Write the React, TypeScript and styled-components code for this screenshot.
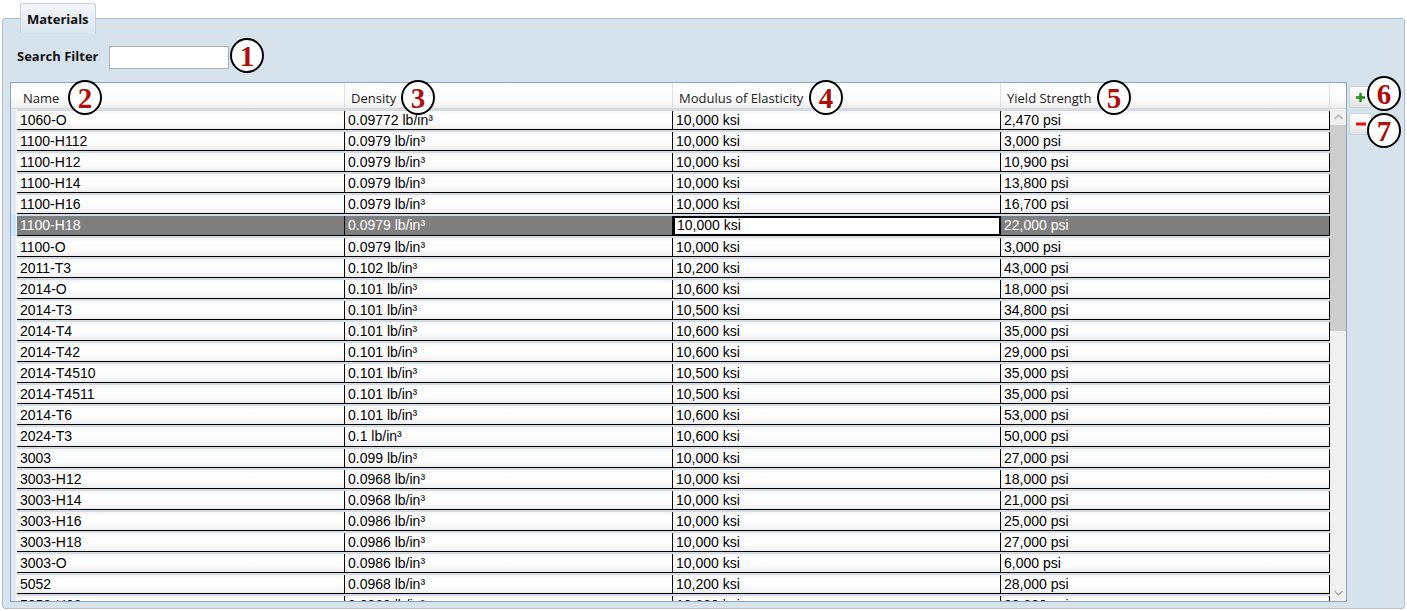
import React from "react";
import styled, { createGlobalStyle } from "styled-components";

const GlobalStyle = createGlobalStyle`
  html, body {
    margin: 0;
    padding: 0;
    background: #ffffff;
  }
  body {
    font-family: "Open Sans", "Liberation Sans", sans-serif;
  }
`;

const ROW_H = 21.1;

const Page = styled.div`
  position: relative;
  width: 1407px;
  height: 611px;
  overflow: hidden;
  padding-top: 3px;
  box-sizing: border-box;
`;

const TabBar = styled.div`
  display: flex;
  padding-left: 20px;
  height: 15px;
`;

const Tab = styled.div`
  position: relative;
  z-index: 1;
  height: 30px;
  width: 76px;
  box-sizing: border-box;
  padding-left: 6px;
  padding-top: 6px;
  border: 1px solid #c3d1de;
  border-bottom: none;
  border-radius: 3px 3px 0 0;
  background: linear-gradient(#f4f7fa, #dbe6ef);
  font-weight: bold;
  font-size: 13px;
  line-height: 18px;
  color: #111;
`;

const Panel = styled.div`
  margin: 0 2px;
  height: 591px;
  box-sizing: border-box;
  border: 1px solid #aebfd0;
  border-radius: 3px;
  background: #d6e3ed;
  padding: 27px 7px 6px 7px;
  display: flex;
  flex-direction: column;
  gap: 13px;
`;

const SearchRow = styled.div`
  display: flex;
  align-items: center;
  gap: 10px;
  padding-left: 7px;
  height: 23px;
`;

const Label = styled.span`
  font-weight: bold;
  font-size: 13px;
  color: #111;
  margin-top: -3px;
`;

const SearchInput = styled.input`
  width: 120px;
  height: 23px;
  box-sizing: border-box;
  border: 1px solid #abadb3;
  background: #fff;
  outline: none;
`;

const ContentRow = styled.div`
  display: flex;
  gap: 2px;
  align-items: flex-start;
`;

const Grid = styled.div`
  width: 1337px;
  height: 520px;
  box-sizing: border-box;
  border: 1px solid #8aa6c6;
  background: #d3dbe3;
  display: flex;
  flex-direction: column;
`;

const HeaderRow = styled.div`
  display: flex;
  height: 26px;
  flex-shrink: 0;
  background: linear-gradient(#ffffff 0%, #fbfbfb 60%, #efefef 100%);
  border-bottom: 1px solid #d8d8d8;
  box-sizing: border-box;
`;

const HeaderSpacer = styled.div`
  width: 6px;
`;

const HeaderCell = styled.div<{ $w: number }>`
  width: ${(p) => p.$w}px;
  box-sizing: border-box;
  border-right: 1px solid #e2e2e2;
  padding-left: 6px;
  padding-top: 6px;
  font-size: 13px;
  color: #222;
  white-space: nowrap;
`;

const Body = styled.div`
  flex: 1;
  display: flex;
  overflow: hidden;
`;

const RowHeaderCol = styled.div`
  width: 6px;
  background: #e3e9ef;
  border-right: 1px solid #f4f6f8;
  box-sizing: border-box;
  display: flex;
  flex-direction: column;
`;

const RowHeaderMark = styled.div<{ $selected: boolean }>`
  height: ${ROW_H}px;
  flex-shrink: 0;
  box-sizing: border-box;
  border-top: 2px solid transparent;
  background: ${(p) => (p.$selected ? "#cfe4f7" : "transparent")};
`;

const Rows = styled.div`
  width: 1313px;
  display: flex;
  flex-direction: column;
`;

const Row = styled.div<{ $selected: boolean }>`
  display: flex;
  height: ${ROW_H}px;
  flex-shrink: 0;
  box-sizing: border-box;
  padding-top: 2px;
  background: #d3dbe3;
  color: ${(p) => (p.$selected ? "#ffffff" : "#000")};
`;

const Cell = styled.div<{ $w: number; $selected: boolean; $focus?: boolean }>`
  width: ${(p) => p.$w}px;
  box-sizing: border-box;
  border-right: 1px solid #000;
  border-bottom: 1px solid #000;
  padding-left: 3px;
  font-family: "Liberation Sans", Arial, sans-serif;
  font-size: 14px;
  line-height: 18px;
  white-space: nowrap;
  overflow: hidden;
  background: ${(p) =>
    p.$focus
      ? "#ffffff"
      : p.$selected
      ? "#7f7f7f"
      : "linear-gradient(#f6f6f6 0%, #ffffff 25%, #fbfbfb 70%, #eeeeee 100%)"};
  ${(p) =>
    p.$focus &&
    `
    color: #000;
    border: 2px solid #000;
    padding-left: 2px;
    line-height: 15px;
  `}
`;

const ScrollBar = styled.div`
  width: 16px;
  background: #f0f0f0;
  display: flex;
  flex-direction: column;
  box-sizing: border-box;
`;

const ScrollArrow = styled.div`
  height: 16px;
  display: flex;
  align-items: center;
  justify-content: center;
  flex-shrink: 0;
`;

const ScrollThumb = styled.div`
  height: 206px;
  background: #cdcdcd;
  flex-shrink: 0;
`;

const ScrollTrack = styled.div`
  flex: 1;
`;

const ButtonCol = styled.div`
  display: flex;
  flex-direction: column;
  gap: 5px;
  margin-top: 4px;
`;

const ActionButton = styled.button`
  width: 23px;
  height: 22px;
  padding: 0;
  box-sizing: border-box;
  border: 1px solid #c9d3dc;
  border-radius: 2px;
  background: linear-gradient(#ffffff, #f3f3f3 50%, #e2e2e2);
  display: flex;
  align-items: center;
  justify-content: center;
`;

const Callout = styled.div<{ $x: number; $y: number }>`
  position: absolute;
  left: ${(p) => p.$x - 17}px;
  top: ${(p) => p.$y - 17}px;
  width: 34px;
  height: 35px;
  box-sizing: border-box;
  border: 2.5px solid #000;
  border-radius: 50%;
  background: #fff;
  display: flex;
  align-items: center;
  justify-content: center;
  font-family: "Liberation Serif", "Times New Roman", serif;
  font-weight: bold;
  font-size: 29px;
  line-height: 1;
  padding-top: 1px;
  color: #b00d0d;
  z-index: 5;
`;

type Material = [string, string, string, string];

const materials: Material[] = [
  ["1060-O", "0.09772", "10,000", "2,470"],
  ["1100-H112", "0.0979", "10,000", "3,000"],
  ["1100-H12", "0.0979", "10,000", "10,900"],
  ["1100-H14", "0.0979", "10,000", "13,800"],
  ["1100-H16", "0.0979", "10,000", "16,700"],
  ["1100-H18", "0.0979", "10,000", "22,000"],
  ["1100-O", "0.0979", "10,000", "3,000"],
  ["2011-T3", "0.102", "10,200", "43,000"],
  ["2014-O", "0.101", "10,600", "18,000"],
  ["2014-T3", "0.101", "10,500", "34,800"],
  ["2014-T4", "0.101", "10,600", "35,000"],
  ["2014-T42", "0.101", "10,600", "29,000"],
  ["2014-T4510", "0.101", "10,500", "35,000"],
  ["2014-T4511", "0.101", "10,500", "35,000"],
  ["2014-T6", "0.101", "10,600", "53,000"],
  ["2024-T3", "0.1", "10,600", "50,000"],
  ["3003", "0.099", "10,000", "27,000"],
  ["3003-H12", "0.0968", "10,000", "18,000"],
  ["3003-H14", "0.0968", "10,000", "21,000"],
  ["3003-H16", "0.0986", "10,000", "25,000"],
  ["3003-H18", "0.0986", "10,000", "27,000"],
  ["3003-O", "0.0986", "10,000", "6,000"],
  ["5052", "0.0968", "10,200", "28,000"],
  ["5052-H32", "0.0968", "10,200", "33,000"],
];

const SELECTED = 5;
const widths = [328, 328, 328, 329];

const Chevron = ({ up }: { up?: boolean }) => (
  <svg width="9" height="6" viewBox="0 0 9 6">
    <path
      d={up ? "M0.5 5 L4.5 1 L8.5 5" : "M0.5 1 L4.5 5 L8.5 1"}
      fill="none"
      stroke="#a8a8a8"
      strokeWidth="1.2"
    />
  </svg>
);

const App = () => (
  <Page>
    <GlobalStyle />
    <TabBar>
      <Tab>Materials</Tab>
    </TabBar>
    <Panel>
      <SearchRow>
        <Label>Search Filter</Label>
        <SearchInput />
      </SearchRow>
      <ContentRow>
        <Grid>
          <HeaderRow>
            <HeaderSpacer />
            <HeaderCell $w={328}>Name</HeaderCell>
            <HeaderCell $w={328}>Density</HeaderCell>
            <HeaderCell $w={328}>Modulus of Elasticity</HeaderCell>
            <HeaderCell $w={329}>Yield Strength</HeaderCell>
          </HeaderRow>
          <Body>
            <RowHeaderCol>
              {materials.map((m, i) => (
                <RowHeaderMark key={m[0]} $selected={i === SELECTED} />
              ))}
            </RowHeaderCol>
            <Rows>
              {materials.map((m, i) => {
                const sel = i === SELECTED;
                return (
                  <Row key={m[0]} $selected={sel}>
                    <Cell $w={widths[0]} $selected={sel}>{m[0]}</Cell>
                    <Cell $w={widths[1]} $selected={sel}>{m[1]} lb/in³</Cell>
                    <Cell $w={widths[2]} $selected={sel} $focus={sel}>
                      {m[2]} ksi
                    </Cell>
                    <Cell $w={widths[3]} $selected={sel}>{m[3]} psi</Cell>
                  </Row>
                );
              })}
            </Rows>
            <ScrollBar>
              <ScrollArrow>
                <Chevron up />
              </ScrollArrow>
              <ScrollThumb />
              <ScrollTrack />
              <ScrollArrow>
                <Chevron />
              </ScrollArrow>
            </ScrollBar>
          </Body>
        </Grid>
        <ButtonCol>
          <ActionButton>
            <svg width="9" height="9" viewBox="0 0 9 9">
              <path d="M3.3 0h2.4v3.3H9v2.4H5.7V9H3.3V5.7H0V3.3h3.3z" fill="#1e8a1e" />
            </svg>
          </ActionButton>
          <ActionButton>
            <svg width="10" height="4" viewBox="0 0 10 4">
              <rect x="0" y="0.5" width="10" height="3" fill="#e01212" />
            </svg>
          </ActionButton>
        </ButtonCol>
      </ContentRow>
    </Panel>
    <Callout $x={247} $y={55}>1</Callout>
    <Callout $x={85} $y={97}>2</Callout>
    <Callout $x={418} $y={97}>3</Callout>
    <Callout $x={826} $y={97}>4</Callout>
    <Callout $x={1114} $y={97}>5</Callout>
    <Callout $x={1384} $y={93}>6</Callout>
    <Callout $x={1384} $y={130}>7</Callout>
  </Page>
);

export default App;
